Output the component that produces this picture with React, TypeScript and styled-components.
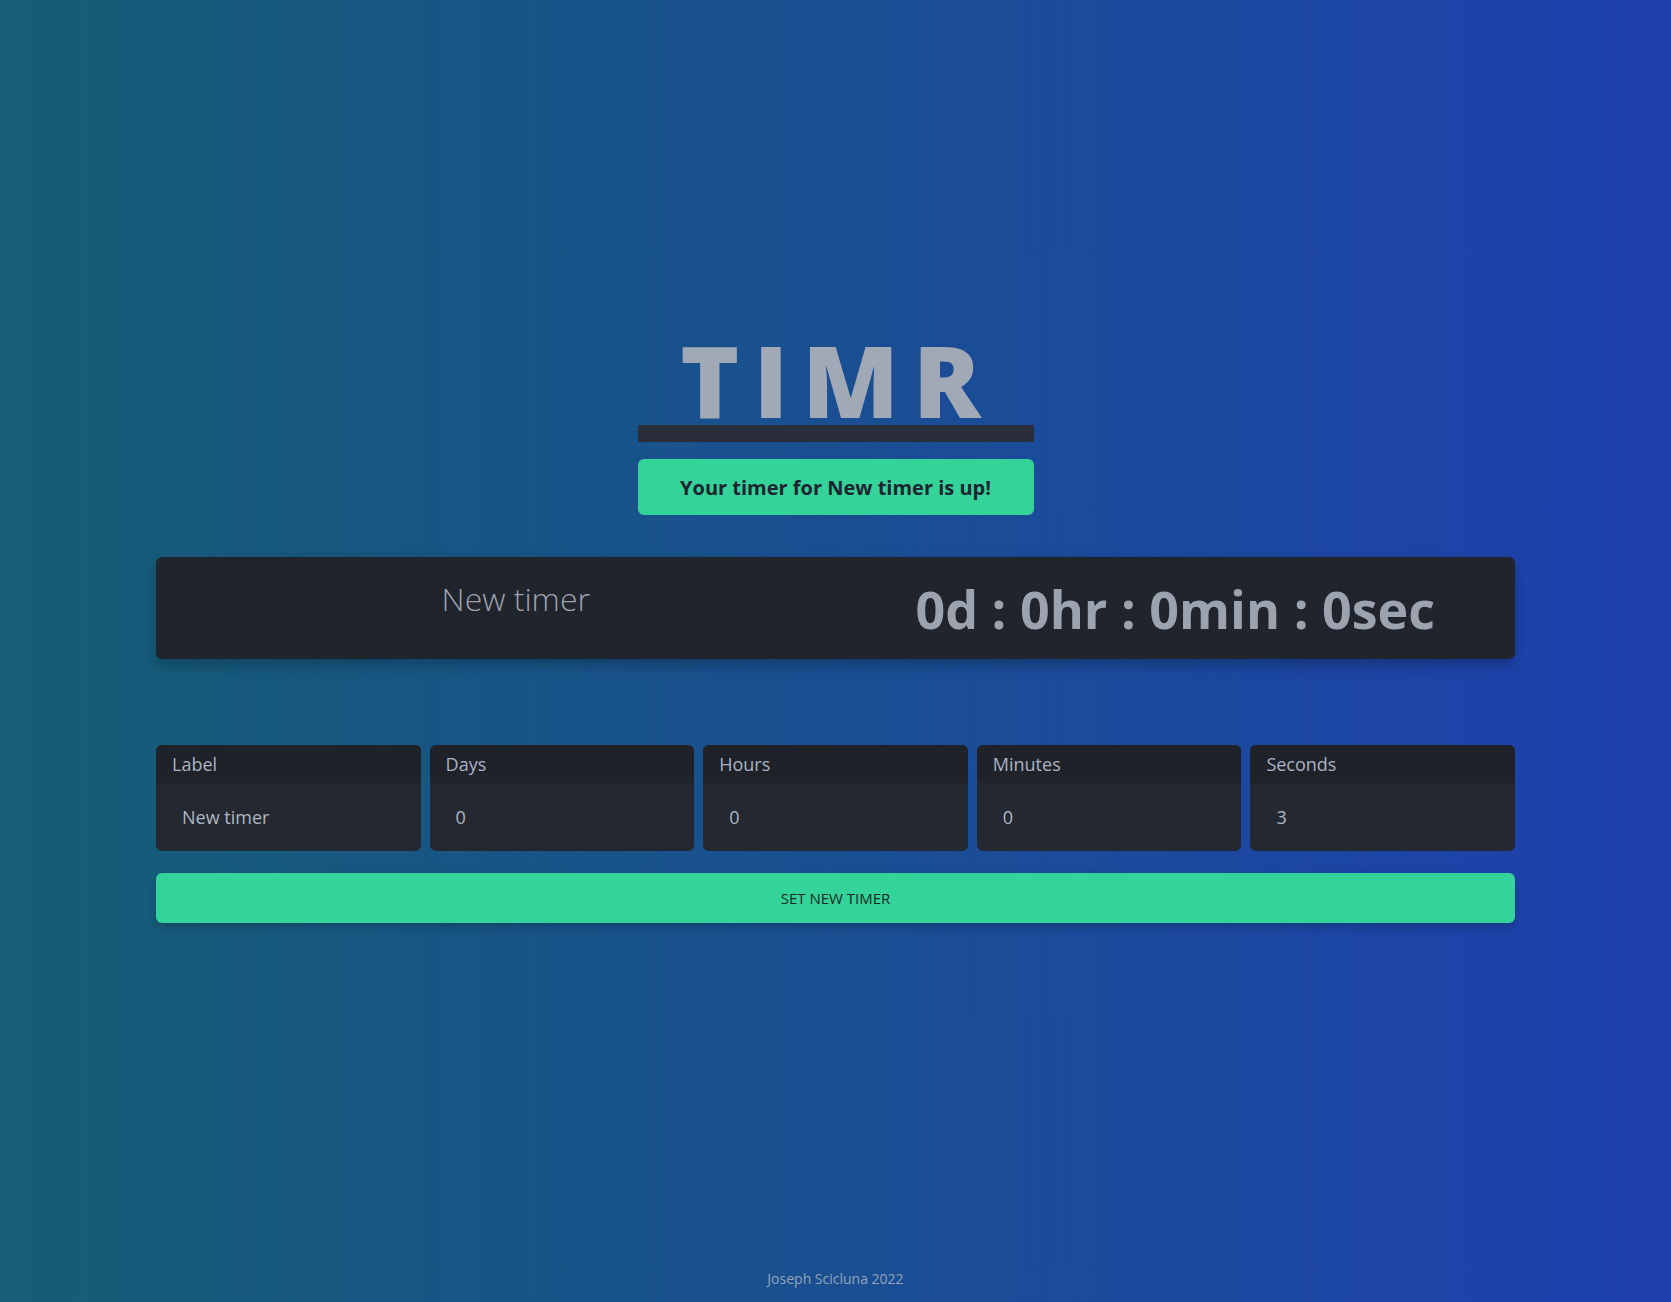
import React from "react";
import styled, { createGlobalStyle } from "styled-components";

const GlobalStyle = createGlobalStyle`
  html, body {
    margin: 0;
    padding: 0;
  }
  body {
    font-family: "Open Sans", "Noto Sans", sans-serif;
    background: linear-gradient(to right, #155e75, #1e40af);
    min-height: 100vh;
  }
`;

const Page = styled.div`
  min-height: 100vh;
  display: flex;
  flex-direction: column;
  align-items: center;
  box-sizing: border-box;
`;

const Main = styled.main`
  width: 1359px;
  padding-top: 329px;
  display: flex;
  flex-direction: column;
  align-items: center;
  flex: 1;
`;

const Title = styled.h1`
  margin: 0;
  font-size: 100px;
  font-weight: 800;
  line-height: 1;
  letter-spacing: 14px;
  color: #a1a8b6;
  padding-left: 4px;
`;

const Underline = styled.div`
  width: 396px;
  height: 17px;
  background: #292e3a;
  margin-top: -4px;
`;

const Banner = styled.div`
  width: 396px;
  height: 56px;
  margin-top: 17px;
  background: #34d399;
  border-radius: 6px;
  display: flex;
  align-items: center;
  justify-content: center;
  font-size: 20px;
  font-weight: 700;
  color: #1f2430;
`;

const Panel = styled.section`
  margin-top: 42px;
  width: 100%;
  height: 102px;
  background: #20242d;
  border-radius: 6px;
  box-shadow: 0 6px 14px rgba(0, 0, 0, 0.25);
  display: grid;
  grid-template-columns: 1fr 1fr;
`;

const PanelLabel = styled.div`
  font-size: 32px;
  font-weight: 300;
  color: #9ca3af;
  text-align: center;
  padding-left: 40px;
  padding-top: 20px;
`;

const Countdown = styled.div`
  font-size: 52px;
  font-weight: 700;
  color: #9ca3af;
  display: flex;
  align-items: center;
  justify-content: center;
`;

const Fields = styled.div`
  margin-top: 86px;
  width: 100%;
  display: grid;
  grid-template-columns: repeat(5, 1fr);
  gap: 9px;
`;

const Field = styled.label`
  display: flex;
  flex-direction: column;
  border-radius: 6px;
  overflow: hidden;
  background: #242830;
`;

const FieldHead = styled.span`
  height: 38px;
  background: #1f2229;
  display: flex;
  align-items: center;
  padding-left: 16px;
  font-size: 18px;
  color: #aab3c3;
`;

const FieldInput = styled.input`
  height: 68px;
  border: none;
  outline: none;
  background: transparent;
  padding: 0 0 0 26px;
  font-family: inherit;
  font-size: 18px;
  color: #aeb6c3;
`;

const SubmitButton = styled.button`
  margin-top: 22px;
  width: 100%;
  height: 50px;
  border: none;
  border-radius: 6px;
  background: #34d399;
  color: #1b2a26;
  font-family: inherit;
  font-size: 15px;
  box-shadow: 0 4px 10px rgba(0, 0, 0, 0.2);
  cursor: pointer;
`;

const Footer = styled.footer`
  padding-bottom: 14px;
  font-size: 14px;
  color: #94a3b8;
`;

const fields = [
  { label: "Label", value: "New timer" },
  { label: "Days", value: "0" },
  { label: "Hours", value: "0" },
  { label: "Minutes", value: "0" },
  { label: "Seconds", value: "3" },
];

export default function App() {
  return (
    <>
      <GlobalStyle />
      <Page>
        <Main>
          <Title>TIMR</Title>
          <Underline />
          <Banner>Your timer for New timer is up!</Banner>
          <Panel>
            <PanelLabel>New timer</PanelLabel>
            <Countdown>0d : 0hr : 0min : 0sec</Countdown>
          </Panel>
          <Fields>
            {fields.map((f) => (
              <Field key={f.label}>
                <FieldHead>{f.label}</FieldHead>
                <FieldInput defaultValue={f.value} />
              </Field>
            ))}
          </Fields>
          <SubmitButton>SET NEW TIMER</SubmitButton>
        </Main>
        <Footer>Joseph Scicluna 2022</Footer>
      </Page>
    </>
  );
}
